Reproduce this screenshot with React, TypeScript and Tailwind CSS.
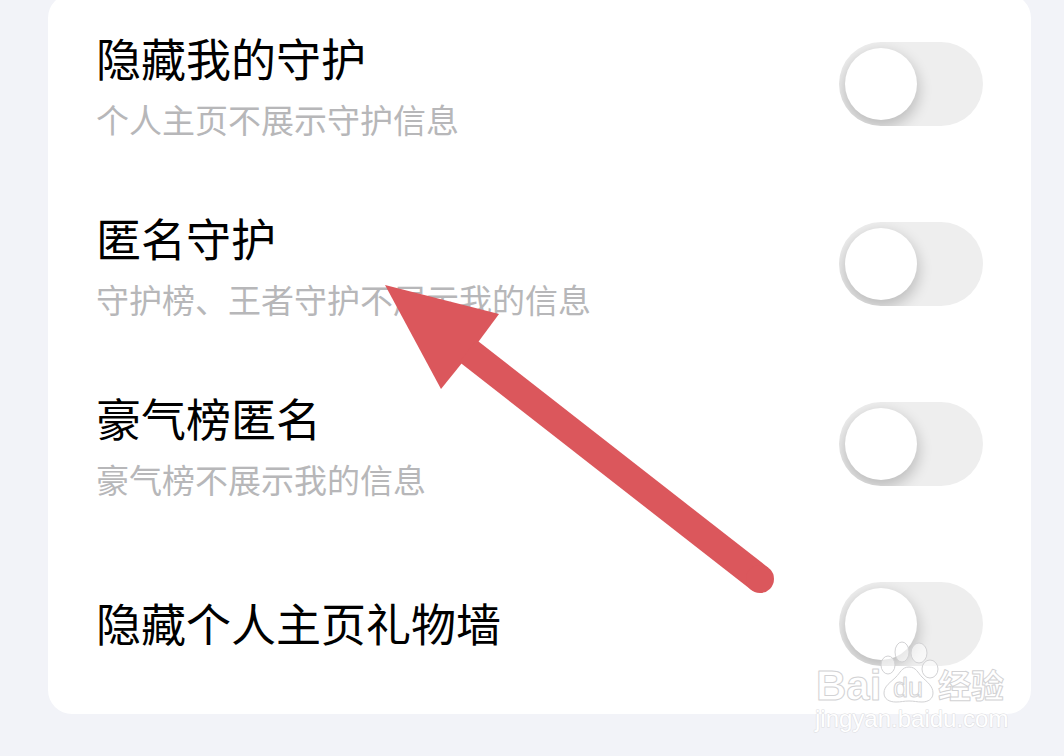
import { useState } from "react";

type Setting = {
  id: string;
  title: string;
  description?: string;
};

const SETTINGS: Setting[] = [
  { id: "hide-guard", title: "隐藏我的守护", description: "个人主页不展示守护信息" },
  { id: "anonymous-guard", title: "匿名守护", description: "守护榜、王者守护不展示我的信息" },
  { id: "anonymous-rank", title: "豪气榜匿名", description: "豪气榜不展示我的信息" },
  { id: "hide-gift-wall", title: "隐藏个人主页礼物墙" },
];

function Switch({ id }: { id: string }) {
  const [checked, setChecked] = useState(false);

  return (
    <input
      id={id}
      type="checkbox"
      role="switch"
      checked={checked}
      onChange={(event) => setChecked(event.target.checked)}
      className="flex h-[84px] w-36 shrink-0 cursor-pointer appearance-none items-center overflow-hidden rounded-full bg-[#eeeeee] px-1.5 before:size-[72px] before:rounded-full before:bg-white before:shadow-[0_6px_14px_2px_rgba(0,0,0,0.2)] before:content-[''] checked:justify-end checked:bg-[#34c759]"
    />
  );
}

function SettingRow({ id, title, description }: Setting) {
  return (
    <li className="flex h-[180px] items-center justify-between gap-6 pr-12 pl-12">
      <label htmlFor={id} className="flex flex-col pb-0.5">
        <span className="text-[45px] leading-[72px] text-black">{title}</span>
        {description && (
          <span className="text-[33px] leading-[50px] text-[#b7b7b9]">{description}</span>
        )}
      </label>
      <Switch id={id} />
    </li>
  );
}

function PointerArrow() {
  return (
    <svg
      viewBox="0 0 392 310"
      className="pointer-events-none absolute top-[284px] left-[384px] w-[392px]"
      aria-hidden="true"
    >
      <path d="M1 1 115 30 95 57 78 79 57 105Z" fill="#db575c" />
      <path d="M84 67 376 295" stroke="#db575c" strokeWidth="28" />
      <circle cx="376" cy="295" r="14" fill="#db575c" />
    </svg>
  );
}

function Watermark() {
  return (
    <svg
      viewBox="0 0 200 100"
      className="pointer-events-none absolute right-[52px] bottom-4 w-[200px]"
      fill="#ffffff"
      stroke="#d2d2d4"
      strokeWidth="1"
      strokeLinejoin="round"
      aria-hidden="true"
    >
      <g fillOpacity="0.6">
        <ellipse cx="76" cy="25" rx="7" ry="9" />
        <ellipse cx="90" cy="12" rx="7" ry="10" />
        <ellipse cx="107" cy="13" rx="8" ry="10" />
        <ellipse cx="118" cy="29" rx="8" ry="9" />
      </g>
      <path d="M97 27c-7 0-9 6-13 10-5 5-12 9-12 16 0 6 5 9 12 9 5 0 8-1 13-1s8 1 13 1c6 0 11-3 11-9 0-7-6-11-11-16-4-4-6-10-13-10Z" />
      <g className="font-['Liberation_Sans',sans-serif]">
        <text x="4" y="60" fontSize="42" className="font-bold">
          Bai
        </text>
        <text x="81" y="57" fontSize="27">
          du
        </text>
        <text
          x="126"
          y="58"
          fontSize="33"
          className="font-['Noto_Sans_CJK_SC',sans-serif] font-bold"
        >
          经验
        </text>
        <text x="3" y="87" fontSize="24" stroke="#dcdce0" style={{ paintOrder: "stroke" }}>
          jingyan.baidu.com
        </text>
      </g>
    </svg>
  );
}

export default function App() {
  return (
    <main className="relative min-h-screen overflow-hidden bg-[#f2f3f8] pr-[33px] pl-12 font-['Noto_Sans_CJK_SC',sans-serif]">
      <ul className="-mt-1.5 rounded-3xl bg-white">
        {SETTINGS.map((setting) => (
          <SettingRow key={setting.id} {...setting} />
        ))}
      </ul>
      <PointerArrow />
      <Watermark />
    </main>
  );
}
